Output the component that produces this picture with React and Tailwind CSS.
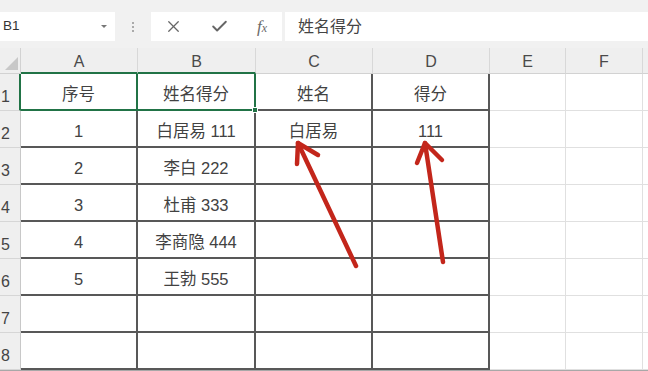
import { X, Check } from "lucide-react";

const cols = [
  { key: "A", w: "w-[117px]", dark: true },
  { key: "B", w: "w-[118px]", dark: true },
  { key: "C", w: "w-[117px]", dark: true },
  { key: "D", w: "w-[117px]", dark: true },
  { key: "E", w: "w-[76px]", dark: false },
  { key: "F", w: "w-[77px]", dark: false },
  { key: "", w: "w-[30px]", dark: false },
];

const rows = [
  ["序号", "姓名得分", "姓名", "得分"],
  ["1", "白居易 111", "白居易", "111"],
  ["2", "李白 222", "", ""],
  ["3", "杜甫 333", "", ""],
  ["4", "李商隐 444", "", ""],
  ["5", "王勃 555", "", ""],
  ["", "", "", ""],
  ["", "", "", ""],
];

const font = { fontFamily: '"Liberation Sans", "Noto Sans CJK SC", sans-serif' };

function Cell({ col, ci, ri, text }) {
  const selected = ri === 0 && ci < 2;
  let border = col.dark
    ? "border-r-2 border-b-2 border-[#585858]"
    : "border-r border-b border-[#e0e0e0]";
  if (selected) border = "border-r-2 border-b-2 border-[#217346]";
  return (
    <div
      className={`${col.w} h-[37px] shrink-0 ${border} relative flex items-center justify-center pt-[5px] text-[16.5px] text-[#424242] bg-white`}
    >
      {text}
      {ri === 0 && ci === 1 && (
        <span className="absolute -right-[4px] -bottom-[4px] w-[6px] h-[6px] bg-[#217346] border border-white z-10" />
      )}
    </div>
  );
}

export default function App() {
  return (
    <div className="relative w-[648px] h-[371px] overflow-hidden bg-white" style={font}>
      {/* formula bar */}
      <div className="h-[48px] bg-[#f1f1f1] flex items-start pt-[12px]">
        <div className="w-[115px] h-[29px] bg-white flex items-center justify-between pl-[3px] pr-[8px] text-[13.5px] text-[#333]">
          <span>B1</span>
          <span className="w-0 h-0 border-l-[3px] border-r-[3px] border-t-[3px] border-l-transparent border-r-transparent border-t-[#777]" />
        </div>
        <div className="w-[36px] h-[29px] flex flex-col items-center justify-center gap-[2px]">
          <span className="w-[2px] h-[2px] bg-[#aaa]" />
          <span className="w-[2px] h-[2px] bg-[#aaa]" />
          <span className="w-[2px] h-[2px] bg-[#aaa]" />
        </div>
        <div className="w-[131px] h-[29px] bg-white flex items-center justify-between pl-[13px] pr-[15px] text-[#666]">
          <X size={19} strokeWidth={1.6} />
          <Check size={19} strokeWidth={2.4} />
          <span className="italic text-[17px] text-[#6a6a6a]" style={{ fontFamily: '"Liberation Serif", serif' }}>
            f<span className="text-[12px]">x</span>
          </span>
        </div>
        <div className="ml-[3px] flex-1 h-[29px] bg-white flex items-center pl-[13px] text-[16px] text-[#444]">
          姓名得分
        </div>
      </div>

      {/* column header */}
      <div className="flex h-[26px] bg-[#efefef]">
        <div className="w-[21px] shrink-0 border-r border-b border-[#d2d2d2] relative">
          <svg className="absolute right-[2px] bottom-[3px]" width="13" height="13" viewBox="0 0 13 13">
            <polygon points="13,0 13,13 0,13" fill="#c8c8c8" />
          </svg>
        </div>
        {cols.map((c, i) => (
          <div
            key={i}
            className={`${c.w} shrink-0 flex items-center justify-center pt-[3px] text-[16px] text-[#4a4a4a] border-r border-[#d8d8d8] ${
              i < 2 ? "border-b-2 border-b-[#217346]" : "border-b border-b-[#d2d2d2]"
            }`}
          >
            {c.key}
          </div>
        ))}
      </div>

      {/* rows */}
      {rows.map((r, ri) => (
        <div key={ri} className="flex">
          <div
            className={`w-[21px] h-[37px] shrink-0 bg-[#efefef] flex items-end pl-[1px] pb-[1px] text-[16px] text-[#444] border-b border-[#d6d6d6] ${
              ri === 0 ? "border-r-2 border-r-[#217346]" : "border-r border-r-[#c8c8c8]"
            }`}
          >
            {ri + 1}
          </div>
          {cols.map((c, ci) => (
            <Cell key={ci} col={c} ci={ci} ri={ri} text={r[ci] || ""} />
          ))}
        </div>
      ))}
      <div className="h-[3px] bg-[#a8a8a8]" />

      {/* hand-drawn arrows */}
      <svg className="absolute inset-0 pointer-events-none" width="648" height="371">
        <g stroke="#c3261b" strokeWidth="4.5" strokeLinecap="round" strokeLinejoin="round" fill="none">
          <path d="M356 266 L298 143" />
          <path d="M297 164 L298 143 L318 155" />
          <path d="M443 262 L425 143" />
          <path d="M417 163 L425 143 L442 160" />
        </g>
      </svg>
    </div>
  );
}
